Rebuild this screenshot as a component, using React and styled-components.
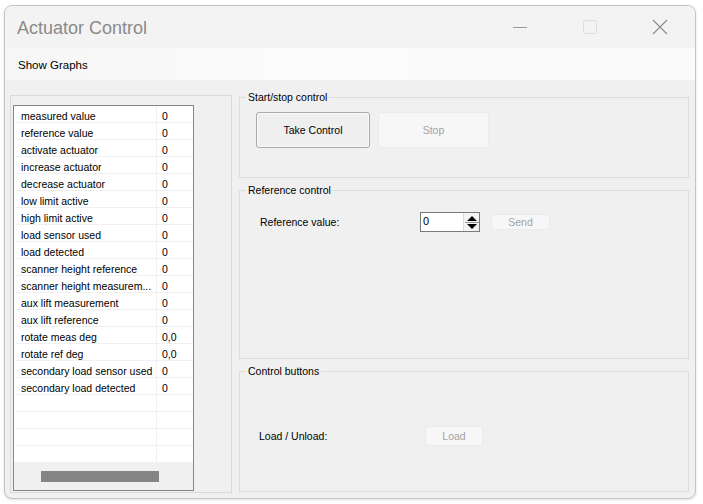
import React from "react";
import styled, { createGlobalStyle } from "styled-components";

const Global = createGlobalStyle`
  html, body { margin: 0; padding: 0; background: #ffffff; }
  body { font-family: "Liberation Sans", Arial, sans-serif; }
  * { box-sizing: border-box; }
`;

const Page = styled.div`
  width: 703px;
  height: 504px;
  padding: 5px 0 0 4px;
`;

const Window = styled.div`
  width: 692px;
  height: 494px;
  border: 1px solid #c4c4c4;
  border-radius: 8px;
  overflow: hidden;
  background: #f0f0f0;
  display: flex;
  flex-direction: column;
  box-shadow: 0 1px 3px rgba(0, 0, 0, 0.12);
`;

const TitleBar = styled.div`
  height: 42px;
  flex: none;
  display: flex;
  align-items: center;
  background: #f3f3f3;
`;

const Title = styled.div`
  flex: 1;
  padding: 2px 0 0 12px;
  font-size: 18px;
  color: #8a8a8a;
`;

const Controls = styled.div`
  display: flex;
  height: 100%;
`;

const CtrlButton = styled.div`
  width: 70px;
  height: 100%;
  display: flex;
  align-items: center;
  justify-content: center;
`;

const MenuBar = styled.div`
  height: 32px;
  flex: none;
  display: flex;
  align-items: center;
  padding-left: 13px;
  background: linear-gradient(to right, #f6f6f6, #fbfbfb 40%, #fafafa);
`;

const MenuItem = styled.div`
  font-size: 11.5px;
  color: #000;
  padding: 1px 0 0 0;
`;

const Body = styled.div`
  flex: 1;
  display: flex;
  align-items: flex-start;
  gap: 7px;
  padding: 11px 6px 0 5px;
`;

const LeftGroup = styled.div`
  width: 222px;
  height: 398px;
  margin-top: 4px;
  border: 1px solid #dadada;
  padding: 9px 0 0 2px;
`;

const List = styled.div`
  width: 181px;
  height: 386px;
  border: 1px solid #828790;
  background: #ffffff;
  display: flex;
  flex-direction: column;
`;

const Rows = styled.div`
  height: 357px;
  overflow: hidden;
  flex: none;
`;

const Row = styled.div`
  height: 17px;
  display: grid;
  grid-template-columns: 142px 36px;
  border-bottom: 1px solid #f0f0f0;
  margin-left: 1px;
  font-size: 10.5px;
  line-height: 16px;
  color: #000;
`;

const NameCell = styled.div`
  padding: 2px 0 0 6px;
  border-right: 1px solid #f0f0f0;
  white-space: nowrap;
  overflow: hidden;
`;

const ValueCell = styled.div`
  padding: 2px 0 0 5px;
  white-space: nowrap;
`;

const HScroll = styled.div`
  flex: 1;
  background: #f0f0f0;
  padding: 8px 0 0 27px;
`;

const Thumb = styled.div`
  width: 118px;
  height: 11px;
  background: #858585;
`;

const RightColumn = styled.div`
  width: 450px;
  display: flex;
  flex-direction: column;
  gap: 6px;
`;

const Group = styled.fieldset`
  margin: 0;
  padding: 0;
  min-width: 0;
  height: ${(p) => p.$h}px;
  border: 1px solid #dcdcdc;
`;

const Legend = styled.legend`
  margin-left: 6px;
  padding: 0 2px;
  font-size: 10.5px;
  line-height: 13px;
  color: #000;
`;

const GroupContent = styled.div`
  display: flex;
  align-items: center;
  gap: ${(p) => p.$gap || 0}px;
  padding: ${(p) => p.$pt}px 0 0 ${(p) => p.$pl}px;
`;

const Label = styled.div`
  width: ${(p) => p.$w}px;
  font-size: 10.5px;
  color: #000;
`;

const Button = styled.div`
  width: ${(p) => p.$w}px;
  height: ${(p) => p.$h}px;
  flex: none;
  display: flex;
  align-items: center;
  justify-content: center;
  font-size: 10.5px;
  border-radius: 3px;
  color: ${(p) => (p.$disabled ? "#a3a3a3" : "#000")};
  background: ${(p) => (p.$disabled ? "#f7f7f7" : "#efefef")};
  border: 1px solid ${(p) => (p.$disabled ? "#ebebeb" : "#a9a9a9")};
  box-shadow: ${(p) => (p.$disabled ? "none" : "inset 0 0 0 1px #fafafa")};
  margin-left: ${(p) => p.$ml || 0}px;
`;

const Spinner = styled.div`
  width: 60px;
  height: 20px;
  border: 1px solid #7a7a7a;
  background: #ffffff;
  display: flex;
  align-items: stretch;
`;

const SpinValue = styled.div`
  flex: 1;
  font-size: 11px;
  line-height: 17px;
  padding-left: 2px;
  color: #000;
`;

const SpinButtons = styled.div`
  width: 16px;
  display: flex;
  align-items: center;
  justify-content: center;
  background: #f4f4f4;
  border-left: 1px solid #dcdcdc;
`;

const data = [
  ["measured value", "0"],
  ["reference value", "0"],
  ["activate actuator", "0"],
  ["increase actuator", "0"],
  ["decrease actuator", "0"],
  ["low limit active", "0"],
  ["high limit active", "0"],
  ["load sensor used", "0"],
  ["load detected", "0"],
  ["scanner height reference", "0"],
  ["scanner height measurem...", "0"],
  ["aux lift measurement", "0"],
  ["aux lift reference", "0"],
  ["rotate meas deg", "0,0"],
  ["rotate ref deg", "0,0"],
  ["secondary load sensor used", "0"],
  ["secondary load detected", "0"],
  ["", ""],
  ["", ""],
  ["", ""],
  ["", ""],
];

export default function App() {
  return (
    <>
      <Global />
      <Page>
        <Window>
          <TitleBar>
            <Title>Actuator Control</Title>
            <Controls>
              <CtrlButton>
                <svg width="16" height="16" viewBox="0 0 16 16">
                  <line x1="1" y1="8.5" x2="15" y2="8.5" stroke="#9a9a9a" strokeWidth="1" />
                </svg>
              </CtrlButton>
              <CtrlButton>
                <svg width="16" height="16" viewBox="0 0 16 16">
                  <rect x="1.5" y="1.5" width="13" height="13" rx="2" fill="none" stroke="#dcdcdc" strokeWidth="1" />
                </svg>
              </CtrlButton>
              <CtrlButton>
                <svg width="16" height="16" viewBox="0 0 16 16">
                  <path d="M1 1 L15 15 M15 1 L1 15" stroke="#8a8a8a" strokeWidth="1.1" fill="none" />
                </svg>
              </CtrlButton>
            </Controls>
          </TitleBar>
          <MenuBar>
            <MenuItem>Show Graphs</MenuItem>
          </MenuBar>
          <Body>
            <LeftGroup>
              <List>
                <Rows>
                  {data.map(([n, v], i) => (
                    <Row key={i}>
                      <NameCell>{n}</NameCell>
                      <ValueCell>{v}</ValueCell>
                    </Row>
                  ))}
                </Rows>
                <HScroll>
                  <Thumb />
                </HScroll>
              </List>
            </LeftGroup>
            <RightColumn>
              <Group $h={87}>
                <Legend>Start/stop control</Legend>
                <GroupContent $pt={8} $pl={16} $gap={8}>
                  <Button $w={114} $h={36}>Take Control</Button>
                  <Button $w={111} $h={36} $disabled>Stop</Button>
                </GroupContent>
              </Group>
              <Group $h={175}>
                <Legend>Reference control</Legend>
                <GroupContent $pt={15} $pl={20}>
                  <Label $w={160}>Reference value:</Label>
                  <Spinner>
                    <SpinValue>0</SpinValue>
                    <SpinButtons>
                      <svg width="14" height="16" viewBox="0 0 14 16">
                        <path d="M7 2 L12 7 L2 7 Z" fill="#000" />
                        <line x1="0" y1="8.5" x2="14" y2="8.5" stroke="#9a9a9a" />
                        <path d="M2 10 L12 10 L7 15 Z" fill="#000" />
                      </svg>
                    </SpinButtons>
                  </Spinner>
                  <Button $w={59} $h={16} $ml={11} $disabled>Send</Button>
                </GroupContent>
              </Group>
              <Group $h={127}>
                <Legend>Control buttons</Legend>
                <GroupContent $pt={48} $pl={19}>
                  <Label $w={166}>Load / Unload:</Label>
                  <Button $w={58} $h={20} $disabled>Load</Button>
                </GroupContent>
              </Group>
            </RightColumn>
          </Body>
        </Window>
      </Page>
    </>
  );
}
